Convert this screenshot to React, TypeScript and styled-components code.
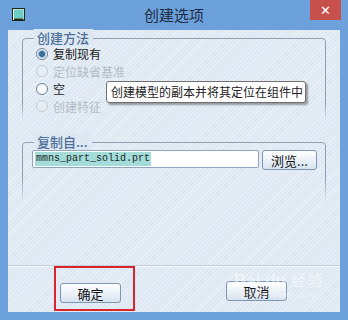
import React from "react";
import styled, { createGlobalStyle } from "styled-components";

const GlobalStyle = createGlobalStyle`
  html, body {
    margin: 0;
    padding: 0;
    width: 348px;
    height: 320px;
    overflow: hidden;
    background: #6ca1dc;
  }
  * { box-sizing: border-box; }
`;

const cjk = `"Noto Sans CJK SC", "Noto Sans", sans-serif`;

const Window = styled.div`
  width: 348px;
  height: 320px;
  background: #6ca1dc;
  display: flex;
  flex-direction: column;
  padding: 0 8px 8px 8px;
  font-family: ${cjk};
`;

const TitleBar = styled.div`
  height: 30px;
  display: flex;
  align-items: flex-start;
  position: relative;
`;

const AppIcon = styled.svg`
  width: 13px;
  height: 13px;
  margin: 8px 0 0 4px;
`;

const Title = styled.div`
  position: absolute;
  left: 0;
  right: 0;
  top: 5px;
  text-align: center;
  font-size: 15px;
  line-height: 20px;
  color: #1d2b40;
`;

const CloseButton = styled.div`
  margin-left: auto;
  margin-right: -1px;
  width: 31px;
  height: 20px;
  background: #c7504b;
  color: #fff;
  display: flex;
  align-items: center;
  justify-content: center;
  font-family: "DejaVu Sans", sans-serif;
  font-size: 13px;
  font-weight: bold;
  position: relative;
  z-index: 1;
`;

const Client = styled.div`
  flex: 1;
  position: relative;
  display: flex;
  flex-direction: column;
  background-color: #dde8f2;
  background-image: repeating-linear-gradient(
    135deg,
    rgba(255, 255, 255, 0.35) 0px,
    rgba(255, 255, 255, 0.35) 1px,
    transparent 1px,
    transparent 3px
  );
`;

const Group = styled.div<{ $top: number; $height: number; $fade: number }>`
  position: relative;
  margin: ${(p) => p.$top}px 14px 0 14px;
  height: ${(p) => p.$height}px;
  &::before {
    content: "";
    position: absolute;
    inset: 0;
    border: 1px solid #8d9fb4;
    border-bottom: none;
    border-radius: 4px 4px 0 0;
    -webkit-mask-image: linear-gradient(to bottom, #000 0%, #000 ${(p) => p.$fade}%, transparent 100%);
    mask-image: linear-gradient(to bottom, #000 0%, #000 ${(p) => p.$fade}%, transparent 100%);
  }
`;

const Legend = styled.div`
  position: absolute;
  left: 12px;
  top: -9px;
  padding: 0 4px 0 3px;
  background: #dde8f2;
  color: #4f6f98;
  font-size: 13px;
  line-height: 17px;
  font-weight: 500;
`;

const Options = styled.div`
  display: flex;
  flex-direction: column;
  padding: 7px 0 0 14px;
`;

const OptionRow = styled.div<{ $disabled?: boolean }>`
  height: 17.5px;
  display: flex;
  align-items: center;
  gap: 5px;
  font-size: 12px;
  color: ${(p) => (p.$disabled ? "#b4bcc6" : "#1a1a1a")};
`;

const RadioCircle = styled.span<{ $checked?: boolean; $disabled?: boolean }>`
  width: 12px;
  height: 12px;
  border-radius: 50%;
  border: 1px solid ${(p) => (p.$disabled ? "#c3ccd6" : "#6d7f93")};
  background: ${(p) =>
    p.$checked
      ? "radial-gradient(circle, #3a6f9c 0 2.5px, #6e9cc2 3.2px, #e9f1f8 4px)"
      : p.$disabled
      ? "#e6edf3"
      : "linear-gradient(#f2f5f8, #ffffff)"};
  flex: none;
`;

const Tooltip = styled.div`
  position: absolute;
  left: 98px;
  top: 51px;
  width: 200px;
  height: 22px;
  background: #fff;
  border: 1px solid #6f6f6f;
  border-radius: 3px;
  box-shadow: 2px 2px 2px rgba(0, 0, 0, 0.35);
  font-size: 12px;
  line-height: 20px;
  color: #222;
  padding-left: 4px;
  white-space: nowrap;
  z-index: 2;
`;

const FileRow = styled.div`
  display: flex;
  align-items: flex-start;
  gap: 3px;
  padding: 8px 0 0 10px;
`;

const FileInput = styled.div`
  width: 227px;
  height: 18px;
  background: #fff;
  border: 1px solid #8ea5bd;
  border-radius: 2px;
  display: flex;
  align-items: center;
  padding-left: 2px;
`;

const Selected = styled.span`
  background: #a3dcd8;
  color: #1d2a2a;
  font-family: "Liberation Mono", "DejaVu Sans Mono", monospace;
  font-size: 10px;
  line-height: 14px;
  padding: 0 1px;
`;

const Button = styled.div<{ $width: number }>`
  width: ${(p) => p.$width}px;
  height: 20px;
  border: 1px solid #7d97b2;
  border-radius: 3px;
  background: linear-gradient(#ffffff 0%, #eef3f8 45%, #d6e3ef 100%);
  display: flex;
  align-items: center;
  justify-content: center;
  font-size: 13px;
  color: #111;
  flex: none;
`;

const Spacer = styled.div`
  flex: 1;
`;

const Footer = styled.div`
  height: 47px;
  border-top: 1px solid #c3cfdb;
  box-shadow: inset 0 1px 0 #f4f8fb;
  display: flex;
  align-items: flex-start;
  position: relative;
`;

const Highlight = styled.div`
  margin: 0 0 0 46px;
  padding: 15px 12px 6px 4px;
  border: 2px solid #d9262c;
`;

const CancelWrap = styled.div`
  margin: 15px 53px 0 auto;
`;

const Watermark = styled.div`
  position: absolute;
  left: 226px;
  top: 5px;
  color: rgba(255, 255, 255, 0.5);
  font-family: "Liberation Sans", sans-serif;
  text-align: center;
  line-height: 1;
  white-space: nowrap;
  pointer-events: none;
`;

const WatermarkMain = styled.div`
  font-size: 17px;
  font-weight: bold;
  span {
    font-family: ${cjk};
    font-weight: normal;
    font-size: 16px;
  }
`;

const WatermarkSub = styled.div`
  font-size: 8px;
  margin-top: 2px;
  letter-spacing: 0.5px;
`;

const options = [
  { label: "复制现有", checked: true },
  { label: "定位缺省基准", disabled: true },
  { label: "空" },
  { label: "创建特征", disabled: true },
];

export default function App() {
  return (
    <>
      <GlobalStyle />
      <Window>
        <TitleBar>
          <AppIcon viewBox="0 0 13 13">
            <rect x="0.5" y="0.5" width="12" height="12" fill="#f2f7e8" stroke="#1c2a1c" />
            <rect x="2" y="1.5" width="9.5" height="9" fill="#6ccdc6" />
            <rect x="2" y="10.5" width="9.5" height="1.5" fill="#1c2a1c" />
          </AppIcon>
          <Title>创建选项</Title>
          <CloseButton>✕</CloseButton>
        </TitleBar>
        <Client>
          <Group $top={8} $height={82} $fade={80}>
            <Legend>创建方法</Legend>
            <Options>
              {options.map((o) => (
                <OptionRow key={o.label} $disabled={o.disabled}>
                  <RadioCircle $checked={o.checked} $disabled={o.disabled} />
                  {o.label}
                </OptionRow>
              ))}
            </Options>
          </Group>
          <Tooltip>创建模型的副本并将其定位在组件中</Tooltip>
          <Group $top={22} $height={60} $fade={60}>
            <Legend>复制自...</Legend>
            <FileRow>
              <FileInput>
                <Selected>mmns_part_solid.prt</Selected>
              </FileInput>
              <Button $width={55}>浏览...</Button>
            </FileRow>
          </Group>
          <Spacer />
          <Footer>
            <Highlight>
              <Button $width={61}>确定</Button>
            </Highlight>
            <CancelWrap>
              <Button $width={61}>取消</Button>
            </CancelWrap>
            <Watermark>
              <WatermarkMain>
                Bai du <span>经验</span>
              </WatermarkMain>
              <WatermarkSub>jingyan.baidu.com</WatermarkSub>
            </Watermark>
          </Footer>
        </Client>
      </Window>
    </>
  );
}
